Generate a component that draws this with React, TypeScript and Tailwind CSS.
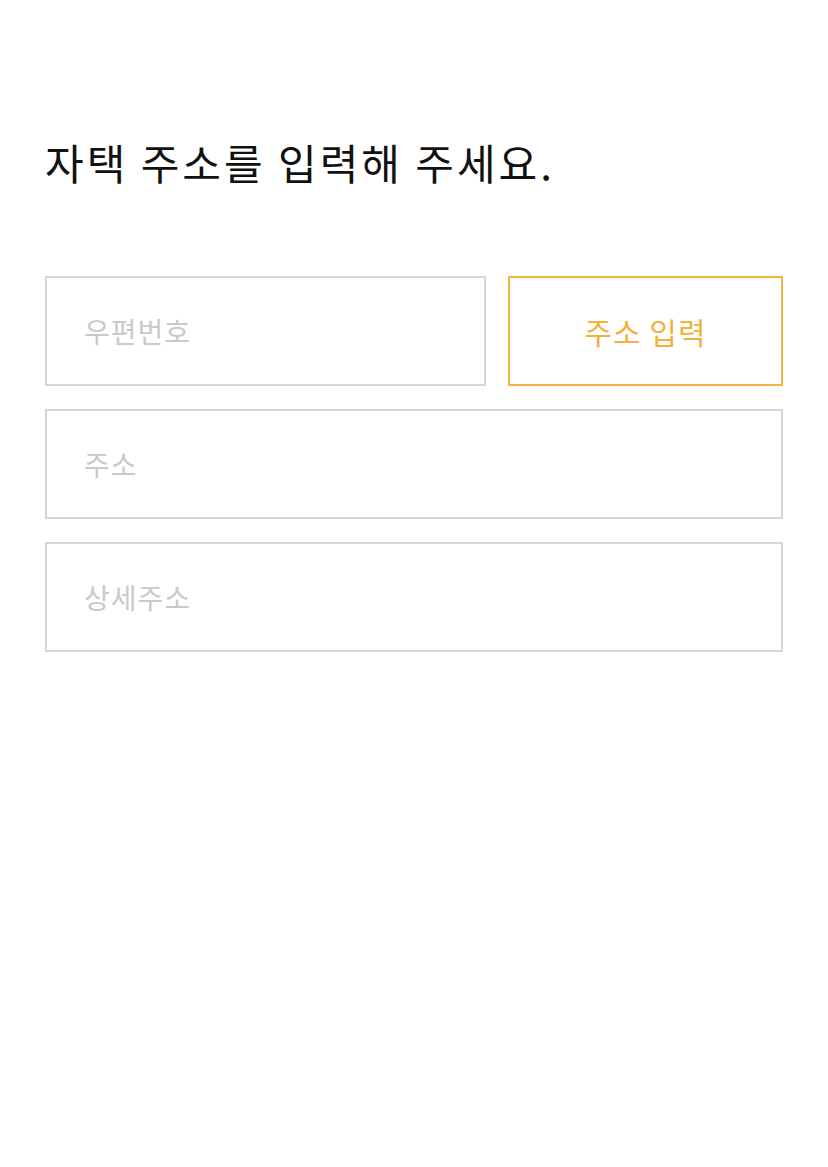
export default function App() {
  const font = { fontFamily: '"Noto Sans CJK KR", "Noto Sans", sans-serif' };
  return (
    <div className="min-h-[1167px] w-full bg-white" style={font}>
      <div className="px-[45px] pt-[132px]">
        <h1 className="text-[42px] font-normal leading-[60px] tracking-[3px] text-[#111111]">
          자택 주소를 입력해 주세요.
        </h1>

        {/* Address form */}
        <div className="mt-[84px] flex flex-col gap-[23px]">
          <div className="flex gap-[22px]">
            <div className="flex h-[110px] flex-1 items-center border-2 border-[#d6d6d6] px-[37px] text-[28px] tracking-[1px] text-[#c9c9c9]">
              우편번호
            </div>
            <button className="flex h-[110px] w-[275px] items-center justify-center border-2 border-[#f4b73e] text-[30px] tracking-[1px] text-[#f2b13c]">
              주소 입력
            </button>
          </div>
          <div className="flex h-[110px] items-center border-2 border-[#d6d6d6] px-[37px] text-[28px] tracking-[1px] text-[#c9c9c9]">
            주소
          </div>
          <div className="flex h-[110px] items-center border-2 border-[#d6d6d6] px-[37px] text-[28px] tracking-[1px] text-[#c9c9c9]">
            상세주소
          </div>
        </div>
      </div>
    </div>
  );
}
